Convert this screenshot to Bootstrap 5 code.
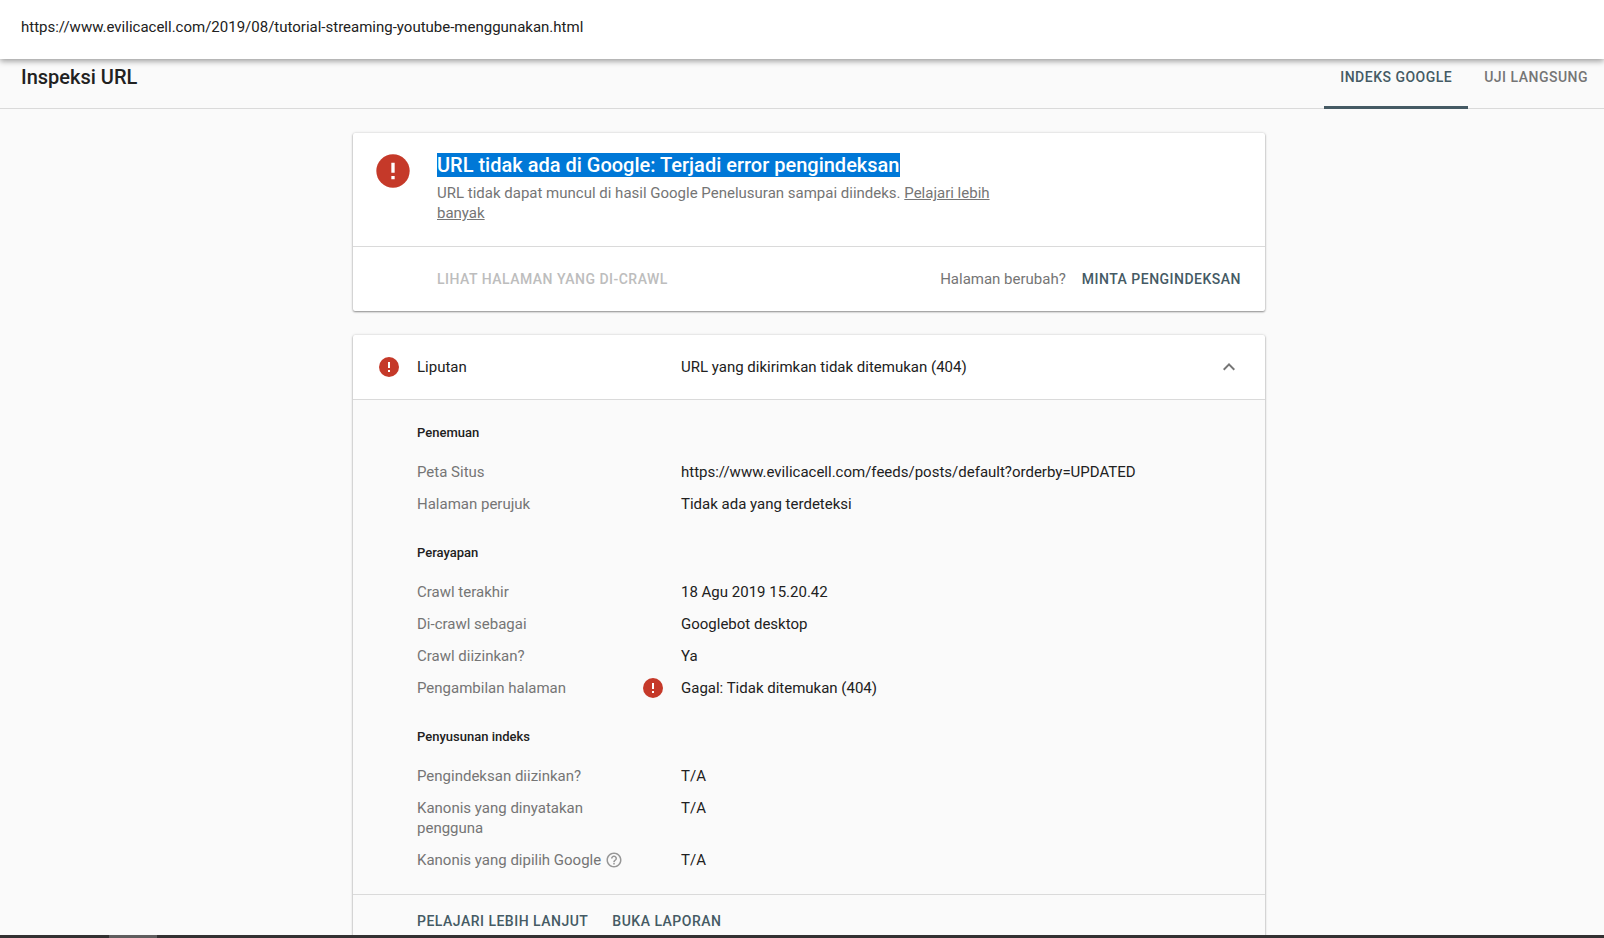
<!DOCTYPE html>
<html lang="id">
<head>
<meta charset="utf-8">
<meta name="viewport" content="width=device-width, initial-scale=1">
<title>Inspeksi URL</title>
<link href="https://cdn.jsdelivr.net/npm/bootstrap@5.3.0/dist/css/bootstrap.min.css" rel="stylesheet">
<style>
  :root {
    --ink: #212121;
    --muted: #757575;
    --accent: #455a64;
    --line: #dadada;
    --page: #fafafa;
  }
  body { font-family: Roboto, "Liberation Sans", sans-serif; font-size: 15px; line-height: 20px; color: var(--ink); background: var(--page); }
  .url-bar { z-index: 2; padding: 17px 21px 22px; box-shadow: 0 2px 6px rgba(0,0,0,.4); }
  .url-bar input { color: var(--ink); line-height: 20px; outline: 0; }
  .title-bar { height: 50px; padding-left: 21px; box-shadow: inset 0 -1px var(--line); }
  .title-bar h1 { font-size: 20px; line-height: 24px; padding-top: 6px; }
  .caps { font-size: 14px; line-height: 20px; font-weight: 500; letter-spacing: .035em; text-transform: uppercase; color: var(--accent); background: none; border: 0; padding: 0; }
  .caps:disabled { color: #bdbdbd; }
  .view-tab { padding: 8px 16px 0; border-bottom: 3px solid transparent; color: var(--muted); }
  .view-tab.active { color: var(--accent); border-color: var(--accent); }
  .scroller { min-height: 0; overflow-y: auto; scrollbar-width: none; padding: 24px 0 24px 14px; }
  .scroller::-webkit-scrollbar { display: none; }
  .column { max-width: 912px; }
  .panel { background: #fff; border-radius: 2px; box-shadow: 0 1px 2px rgba(0,0,0,.4), 0 0 3px rgba(0,0,0,.15); }
  .verdict { padding: 18px 24px 23px 20px; gap: 24px; }
  .verdict h2 { font-size: 20px; line-height: 28px; }
  .verdict h2 span { background: #0078d7; color: #fff; }
  .verdict p { max-width: 560px; padding-top: 4px; }
  .quiet, .quiet a { color: var(--muted); }
  .actions { border-top: 1px solid var(--line); padding: 22px 24px 22px 84px; }
  .coverage { padding: 20px 24px; background: none; border: 0; color: var(--ink); }
  .name-col { width: 264px; flex: none; }
  .details { background: var(--page); border-top: 1px solid var(--line); padding: 0 24px 18px 64px; }
  .details h3 { font-size: 13px; line-height: 20px; margin: 23px 0 13px; }
  .entry { padding: 6px 0; }
  .entry dt { padding-right: 60px; font-weight: 400; color: var(--muted); }
  .entry dt.wide { padding-right: 24px; }
  .state { width: 24px; height: 20px; margin-right: 16px; }
  .more { background: var(--page); border-top: 1px solid var(--line); padding: 16px 24px 16px 64px; gap: 24px; }
  .taskbar { height: 3px; background: #333132; z-index: 2; }
  .taskbar div { width: 48px; margin-left: 109px; background: #5f5d5e; }
</style>
</head>
<body>
<svg class="d-none" aria-hidden="true">
  <symbol id="error" viewBox="0 0 24 24">
    <circle cx="12" cy="12" r="10" fill="#c53929"/>
    <path d="M11 7h2v6h-2zM11 15h2v2h-2z" fill="#fff"/>
  </symbol>
  <symbol id="help" viewBox="0 0 24 24">
    <path fill="#979797" d="M11 18h2v-2h-2v2zm1-16C6.480 2 2 6.480 2 12s4.480 10 10 10 10-4.480 10-10S17.520 2 12 2zm0 18c-4.410 0-8-3.590-8-8s3.590-8 8-8 8 3.590 8 8-3.590 8-8 8zm0-14c-2.210 0-4 1.790-4 4h2c0-1.100.9-2 2-2s2 .9 2 2c0 2-3 1.750-3 5h2c0-2.250 3-2.500 3-5 0-2.210-1.790-4-4-4z"/>
  </symbol>
  <symbol id="collapse" viewBox="0 0 24 24">
    <path fill="#757575" d="M12 8l-6 6 1.410 1.410L12 10.830l4.590 4.580L18 14z"/>
  </symbol>
</svg>
<div class="vh-100 d-flex flex-column overflow-hidden">
  <header class="url-bar bg-white position-relative">
    <input type="text" class="d-block w-100 border-0 p-0 bg-transparent" aria-label="URL" value="https://www.evilicacell.com/2019/08/tutorial-streaming-youtube-menggunakan.html">
  </header>

  <div class="title-bar d-flex justify-content-between flex-shrink-0">
    <h1 class="fw-medium mb-0">Inspeksi URL</h1>
    <nav class="d-flex" role="tablist">
      <button type="button" role="tab" aria-selected="true" class="caps view-tab active d-flex align-items-start">Indeks Google</button>
      <button type="button" role="tab" aria-selected="false" class="caps view-tab d-flex align-items-start">Uji Langsung</button>
    </nav>
  </div>

  <main class="scroller flex-grow-1">
    <div class="column mx-auto d-flex flex-column gap-4">
      <section class="panel">
        <div class="verdict d-flex align-items-start">
          <svg width="40" height="40" class="flex-shrink-0" role="img" aria-label="Error"><use href="#error"/></svg>
          <div>
            <h2 class="fw-medium mb-0"><span>URL tidak ada di Google: Terjadi error pengindeksan</span></h2>
            <p class="quiet mb-0">URL tidak dapat muncul di hasil Google Penelusuran sampai diindeks. <a href="#">Pelajari lebih banyak</a></p>
          </div>
        </div>
        <div class="actions d-flex align-items-center">
          <button type="button" class="caps me-auto" disabled>Lihat halaman yang di-crawl</button>
          <span class="quiet me-3">Halaman berubah?</span>
          <button type="button" class="caps">Minta pengindeksan</button>
        </div>
      </section>

      <section class="panel">
        <button type="button" class="coverage d-flex align-items-center w-100 text-start" data-bs-toggle="collapse" data-bs-target="#coverage-body" aria-expanded="true" aria-controls="coverage-body">
          <svg width="24" height="24" class="flex-shrink-0 me-3" role="img" aria-label="Error"><use href="#error"/></svg>
          <span class="name-col">Liputan</span>
          <span class="flex-grow-1">URL yang dikirimkan tidak ditemukan (404)</span>
          <svg width="24" height="24" aria-hidden="true"><use href="#collapse"/></svg>
        </button>
        <div id="coverage-body" class="collapse show">
          <div class="details d-flow-root">
            <h3 class="fw-medium">Penemuan</h3>
            <dl class="mb-0">
              <div class="entry d-flex"><dt class="name-col">Peta Situs</dt><dd class="mb-0">https://www.evilicacell.com/feeds/posts/default?orderby=UPDATED</dd></div>
              <div class="entry d-flex"><dt class="name-col">Halaman perujuk</dt><dd class="mb-0">Tidak ada yang terdeteksi</dd></div>
            </dl>
            <h3 class="fw-medium">Perayapan</h3>
            <dl class="mb-0">
              <div class="entry d-flex"><dt class="name-col">Crawl terakhir</dt><dd class="mb-0">18 Agu 2019 15.20.42</dd></div>
              <div class="entry d-flex"><dt class="name-col">Di-crawl sebagai</dt><dd class="mb-0">Googlebot desktop</dd></div>
              <div class="entry d-flex"><dt class="name-col">Crawl diizinkan?</dt><dd class="mb-0">Ya</dd></div>
              <div class="entry d-flex">
                <dt class="name-col d-flex justify-content-between pe-0">Pengambilan halaman
                  <span class="state d-flex align-items-center"><svg width="24" height="24" class="flex-shrink-0" role="img" aria-label="Error"><use href="#error"/></svg></span>
                </dt>
                <dd class="mb-0">Gagal: Tidak ditemukan (404)</dd>
              </div>
            </dl>
            <h3 class="fw-medium">Penyusunan indeks</h3>
            <dl class="mb-0">
              <div class="entry d-flex"><dt class="name-col">Pengindeksan diizinkan?</dt><dd class="mb-0">T/A</dd></div>
              <div class="entry d-flex"><dt class="name-col">Kanonis yang dinyatakan pengguna</dt><dd class="mb-0">T/A</dd></div>
              <div class="entry d-flex">
                <dt class="name-col wide d-flex align-items-center gap-1">Kanonis yang dipilih Google <svg width="18" height="18" role="img" aria-label="Bantuan"><use href="#help"/></svg></dt>
                <dd class="mb-0">T/A</dd>
              </div>
            </dl>
          </div>
          <div class="more d-flex">
            <button type="button" class="caps">Pelajari lebih lanjut</button>
            <button type="button" class="caps">Buka laporan</button>
          </div>
        </div>
      </section>
    </div>
  </main>

  <div class="taskbar d-flex flex-shrink-0"><div></div></div>
</div>
<script src="https://cdn.jsdelivr.net/npm/bootstrap@5.3.0/dist/js/bootstrap.bundle.min.js"></script>
</body>
</html>
